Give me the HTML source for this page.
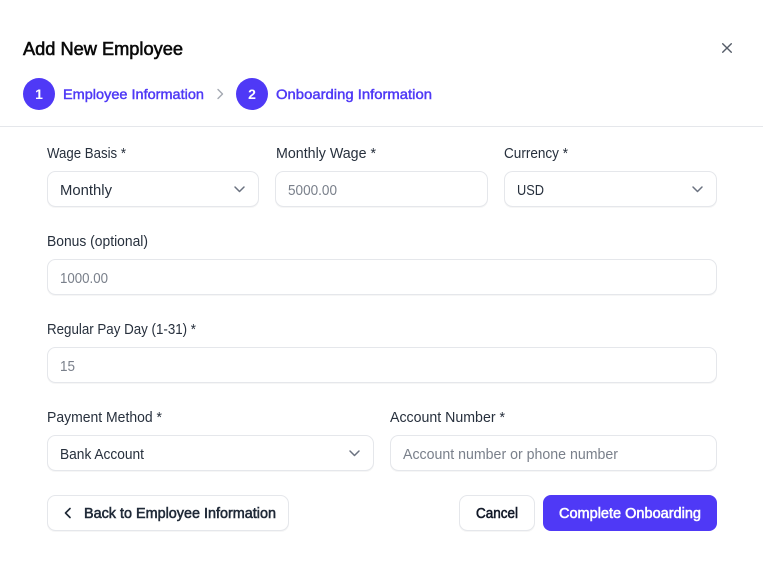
<!DOCTYPE html>
<html><head><meta charset="utf-8">
<style>
html,body{margin:0;padding:0;background:#fff;width:763px;height:573px;overflow:hidden}
svg{display:block;position:absolute;left:0;top:0}
text{font-family:"Liberation Sans",sans-serif;font-size:14.5px}
.l{fill:#27303d}
.v{fill:#27303d}
.p{fill:#7a808b}
.s{fill:#4f39f6;stroke:#4f39f6;stroke-width:.45px;font-size:14px}
.b{font-size:14.5px;stroke-width:.55px}
.box{fill:#fff;stroke:#e5e7eb;stroke-width:1}
.sh{fill:#000;opacity:.035}
.ic{fill:none;stroke:#6b7280;stroke-width:1.5;stroke-linecap:round;stroke-linejoin:round}
</style></head>
<body>
<svg width="763" height="573" viewBox="0 0 763 573" xmlns="http://www.w3.org/2000/svg">
<rect width="763" height="573" fill="#fff"/>
<text x="23" y="55" textLength="160" lengthAdjust="spacingAndGlyphs" style="font-size:18.5px;stroke-width:.6px" fill="#0a0a0a" stroke="#0a0a0a">Add New Employee</text>
<path d="M722.7 43.7l8.6 8.6M731.3 43.7l-8.6 8.6" fill="none" stroke="#555c68" stroke-width="1.4" stroke-linecap="round"/>

<circle cx="39" cy="94" r="16" fill="#4f39f6"/>
<text x="39" y="99" text-anchor="middle" style="font-size:14px;font-weight:700" fill="#fff">1</text>
<text class="s" x="63" y="99" textLength="141" lengthAdjust="spacingAndGlyphs">Employee Information</text>
<path d="M218 89.5l4.5 4.5-4.5 4.5" fill="none" stroke="#a3a8b2" stroke-width="1.4" stroke-linecap="round" stroke-linejoin="round"/>
<circle cx="252" cy="94" r="16" fill="#4f39f6"/>
<text x="252" y="99" text-anchor="middle" style="font-size:14px;font-weight:700" fill="#fff">2</text>
<text class="s" x="276" y="99" textLength="156" lengthAdjust="spacingAndGlyphs">Onboarding Information</text>
<rect x="0" y="126" width="763" height="1" fill="#e5e7eb"/>

<text class="l" x="47" y="158" textLength="79" lengthAdjust="spacingAndGlyphs">Wage Basis *</text>
<text class="l" x="276" y="158" textLength="100" lengthAdjust="spacingAndGlyphs">Monthly Wage *</text>
<text class="l" x="504" y="158" textLength="64" lengthAdjust="spacingAndGlyphs">Currency *</text>

<rect class="sh" x="47" y="172" width="212" height="36" rx="8"/>
<rect class="box" x="47.5" y="171.5" width="211" height="35" rx="8"/>
<text class="v" x="60" y="195" textLength="52" lengthAdjust="spacingAndGlyphs">Monthly</text>
<path class="ic" d="M235 187l4.5 4.5 4.5-4.5"/>

<rect class="sh" x="275" y="172" width="213" height="36" rx="8"/>
<rect class="box" x="275.5" y="171.5" width="212" height="35" rx="8"/>
<text class="p" x="288" y="195" textLength="49" lengthAdjust="spacingAndGlyphs">5000.00</text>

<rect class="sh" x="504" y="172" width="213" height="36" rx="8"/>
<rect class="box" x="504.5" y="171.5" width="212" height="35" rx="8"/>
<text class="v" x="517" y="195" textLength="27" lengthAdjust="spacingAndGlyphs">USD</text>
<path class="ic" d="M693 187l4.5 4.5 4.5-4.5"/>

<text class="l" x="47" y="246" textLength="101" lengthAdjust="spacingAndGlyphs">Bonus (optional)</text>
<rect class="sh" x="47" y="260" width="670" height="36" rx="8"/>
<rect class="box" x="47.5" y="259.5" width="669" height="35" rx="8"/>
<text class="p" x="60" y="283" textLength="48" lengthAdjust="spacingAndGlyphs">1000.00</text>

<text class="l" x="47" y="334" textLength="149" lengthAdjust="spacingAndGlyphs">Regular Pay Day (1-31) *</text>
<rect class="sh" x="47" y="348" width="670" height="36" rx="8"/>
<rect class="box" x="47.5" y="347.5" width="669" height="35" rx="8"/>
<text class="p" x="60" y="371" textLength="15" lengthAdjust="spacingAndGlyphs">15</text>

<text class="l" x="47" y="422" textLength="115" lengthAdjust="spacingAndGlyphs">Payment Method *</text>
<text class="l" x="390" y="422" textLength="115" lengthAdjust="spacingAndGlyphs">Account Number *</text>

<rect class="sh" x="47" y="436" width="327" height="36" rx="8"/>
<rect class="box" x="47.5" y="435.5" width="326" height="35" rx="8"/>
<text class="v" x="60" y="459" textLength="84" lengthAdjust="spacingAndGlyphs">Bank Account</text>
<path class="ic" d="M350 451l4.5 4.5 4.5-4.5"/>

<rect class="sh" x="390" y="436" width="327" height="36" rx="8"/>
<rect class="box" x="390.5" y="435.5" width="326" height="35" rx="8"/>
<text class="p" x="403" y="459" textLength="215" lengthAdjust="spacingAndGlyphs">Account number or phone number</text>

<rect class="sh" x="47" y="496" width="242" height="36" rx="8"/>
<rect class="box" x="47.5" y="495.5" width="241" height="35" rx="8"/>
<path d="M70 508.5l-4.5 4.5 4.5 4.5" fill="none" stroke="#1f2937" stroke-width="1.6" stroke-linecap="round" stroke-linejoin="round"/>
<text class="b" x="84" y="518" textLength="192" lengthAdjust="spacingAndGlyphs" fill="#1f2937" stroke="#1f2937">Back to Employee Information</text>

<rect class="sh" x="459" y="496" width="76" height="36" rx="8"/>
<rect class="box" x="459.5" y="495.5" width="75" height="35" rx="8"/>
<text class="b" x="476" y="518" textLength="42" lengthAdjust="spacingAndGlyphs" fill="#111827" stroke="#111827">Cancel</text>

<rect x="543" y="495" width="174" height="36" rx="8" fill="#4f39f6"/>
<text class="b" x="559" y="518" textLength="142" lengthAdjust="spacingAndGlyphs" fill="#fff" stroke="#fff">Complete Onboarding</text>
</svg>
</body></html>
